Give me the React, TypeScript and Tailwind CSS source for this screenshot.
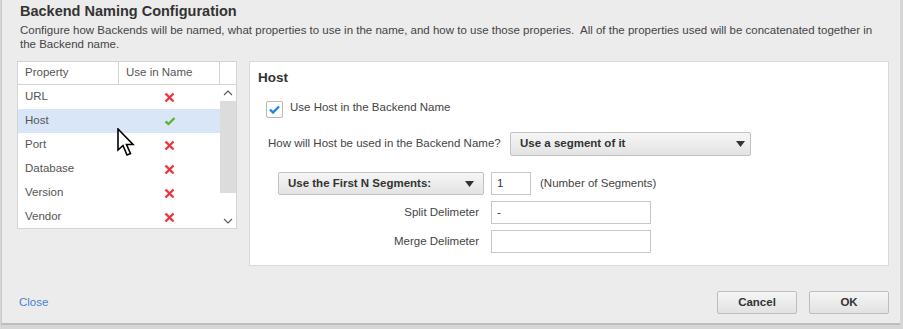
const rows = [
  { name: "URL", on: false },
  { name: "Host", on: true },
  { name: "Port", on: false },
  { name: "Database", on: false },
  { name: "Version", on: false },
  { name: "Vendor", on: false },
];

const RedX = () => (
  <svg width="11" height="11" viewBox="0 0 11 11">
    <path d="M1.5 1.5 L9.5 9.5 M9.5 1.5 L1.5 9.5" stroke="#e8373f" strokeWidth="2.4" strokeLinecap="butt" />
  </svg>
);

const GreenCheck = () => (
  <svg width="12" height="10" viewBox="0 0 12 10">
    <path d="M1.5 5.5 L4.5 8 L10.5 2" stroke="#5cb531" strokeWidth="2.4" fill="none" />
  </svg>
);

const Caret = () => (
  <svg width="9" height="6" viewBox="0 0 9 6">
    <path d="M0 0 H9 L4.5 6 Z" fill="#333" />
  </svg>
);

const Cursor = () => (
  <svg width="18" height="29" viewBox="0 0 18 29" className="absolute left-[117px] top-[128px]">
    <path
      d="M1 1 L1 22 L6 17.5 L10 27 L13.5 25.5 L9.5 16.5 L16 16.5 Z"
      fill="#fff"
      stroke="#000"
      strokeWidth="1.6"
      strokeLinejoin="miter"
    />
  </svg>
);

export default function App() {
  return (
    <div className="relative w-[903px] h-[329px] bg-[#d6d6d6] font-['Liberation_Sans',Arial,sans-serif] text-[#444] overflow-hidden">
      <div className="ml-[1px] mr-[3px] h-[325px] bg-[#ececec] border-l border-[#c9c9c9] border-b-2 border-b-[#bdbdbd] flex flex-col">
        {/* Header */}
        <div className="pl-[18px] pt-[1px]">
          <h1 className="text-[14.5px] font-bold text-[#333] leading-[20px]">Backend Naming Configuration</h1>
          <p className="mt-[2px] text-[11.5px] leading-[14px] text-[#444] pr-[14px]">
            Configure how Backends will be named, what properties to use in the name, and how to use those properies.&nbsp; All of the
            properties used will be concatenated together in the Backend name.
          </p>
        </div>

        {/* Body */}
        <div className="flex mt-[10px] ml-[15px] gap-[12px]">
          {/* Property table */}
          <div className="w-[220px] h-[168px] bg-white border border-[#d4d4d4] text-[11.5px] text-[#555]">
            <div className="flex h-[23px] border-b border-[#d4d4d4]">
              <div className="w-[101px] pl-[7px] flex items-center border-r border-[#d4d4d4]">Property</div>
              <div className="w-[101px] pl-[7px] flex items-center border-r border-[#d4d4d4]">Use in Name</div>
              <div className="flex-1" />
            </div>
            <div className="flex">
              <div className="w-[202px]">
                {rows.map((r) => (
                  <div key={r.name} className={`flex h-[24px] items-center ${r.on ? "bg-[#d9e6f8]" : ""}`}>
                    <div className="w-[101px] pl-[7px]">{r.name}</div>
                    <div className="w-[101px] flex justify-center">{r.on ? <GreenCheck /> : <RedX />}</div>
                  </div>
                ))}
              </div>
              <div className="w-[16px] h-[144px] flex flex-col items-center">
                <div className="h-[16px] flex items-center justify-center">
                  <svg width="10" height="6" viewBox="0 0 10 6">
                    <path d="M1 5 L5 1 L9 5" stroke="#555" strokeWidth="1.1" fill="none" />
                  </svg>
                </div>
                <div className="w-full h-[92px] bg-[#dcdcdc]" />
                <div className="flex-1 flex items-end pb-[5px]">
                  <svg width="10" height="6" viewBox="0 0 10 6">
                    <path d="M1 1 L5 5 L9 1" stroke="#555" strokeWidth="1.1" fill="none" />
                  </svg>
                </div>
              </div>
            </div>
          </div>

          {/* Host panel */}
          <div className="w-[640px] h-[205px] bg-white border border-[#d9d9d9] pl-[8px] text-[11.5px] text-[#444]">
            <h2 className="mt-[8px] text-[13.5px] font-bold text-[#333] leading-[16px]">Host</h2>
            <div className="flex items-center mt-[15px] ml-[8px]">
              <div className="w-[17px] h-[17px] border border-[#b8b8b8] rounded-[2px] flex items-center justify-center bg-white">
                <svg width="11" height="9" viewBox="0 0 11 9">
                  <path d="M1 4.5 L4 7.5 L10 1.5" stroke="#1f86e0" strokeWidth="2.4" fill="none" />
                </svg>
              </div>
              <span className="ml-[7px] -mt-[4px]">Use Host in the Backend Name</span>
            </div>
            <div className="flex items-center mt-[14px] ml-[10px]">
              <span className="w-[230px] shrink-0 whitespace-nowrap">How will Host be used in the Backend Name?</span>
              <button className="ml-[12px] w-[241px] h-[24px] border border-[#c2c2c2] rounded-[2px] bg-gradient-to-b from-[#f6f6f6] to-[#e3e3e3] flex items-center justify-between pl-[9px] pr-[5px] font-bold text-[11.5px] text-[#333]">
                Use a segment of it
                <Caret />
              </button>
            </div>
            <div className="flex items-center mt-[16px] ml-[20px]">
              <button className="w-[206px] h-[23px] border border-[#c2c2c2] rounded-[2px] bg-gradient-to-b from-[#f6f6f6] to-[#e3e3e3] flex items-center justify-between pl-[9px] pr-[9px] font-bold text-[11.5px] text-[#333]">
                Use the First N Segments:
                <Caret />
              </button>
              <div className="ml-[7px] w-[40px] h-[23px] border border-[#c7c7c7] flex items-center pl-[5px] text-[#333]">1</div>
              <span className="ml-[9px]">(Number of Segments)</span>
            </div>
            <div className="flex items-center mt-[6px]">
              <span className="w-[221px] text-right">Split Delimeter</span>
              <div className="ml-[12px] w-[160px] h-[23px] border border-[#c7c7c7] flex items-center pl-[5px] text-[#333]">-</div>
            </div>
            <div className="flex items-center mt-[6px]">
              <span className="w-[221px] text-right">Merge Delimeter</span>
              <div className="ml-[12px] w-[160px] h-[23px] border border-[#c7c7c7]" />
            </div>
          </div>
        </div>

        {/* Footer */}
        <div className="flex items-center mt-[25px] pl-[17px] pr-[11px]">
          <a className="text-[11.5px] text-[#4a7ed8]">Close</a>
          <div className="ml-auto flex gap-[12px]">
            <button className="w-[80px] h-[23px] border border-[#bdbdbd] rounded-[2px] bg-gradient-to-b from-[#f5f5f5] to-[#e2e2e2] font-bold text-[11.5px] text-[#333]">
              Cancel
            </button>
            <button className="w-[80px] h-[23px] border border-[#bdbdbd] rounded-[2px] bg-gradient-to-b from-[#f5f5f5] to-[#e2e2e2] font-bold text-[11.5px] text-[#333]">
              OK
            </button>
          </div>
        </div>
      </div>
      <Cursor />
    </div>
  );
}
